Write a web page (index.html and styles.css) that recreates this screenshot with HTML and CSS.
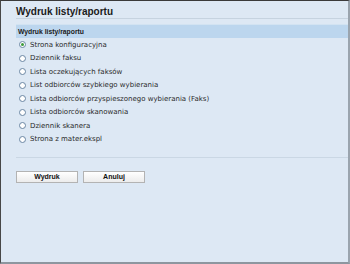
FILE: index.html
```html
<!DOCTYPE html>
<html lang="pl">
<head>
    <meta charset="UTF-8">
    <title>Wydruk listy/raportu</title>
    <link rel="stylesheet" href="styles.css">
</head>
<body>

    <div id="frame">
        <div id="title">Wydruk listy/raportu</div>

        <div id="section-head">Wydruk listy/raportu</div>

        <div id="report-list">
            <label class="report-row"><span class="radio checked"></span>Strona konfiguracyjna</label>
            <label class="report-row"><span class="radio"></span>Dziennik faksu</label>
            <label class="report-row"><span class="radio"></span>Lista oczekujących faksów</label>
            <label class="report-row"><span class="radio"></span>List odbiorców szybkiego wybierania</label>
            <label class="report-row"><span class="radio"></span>Lista odbiorców przyspieszonego wybierania (Faks)</label>
            <label class="report-row"><span class="radio"></span>Lista odbiorców skanowania</label>
            <label class="report-row"><span class="radio"></span>Dziennik skanera</label>
            <label class="report-row"><span class="radio"></span>Strona z mater.ekspl</label>
        </div>

        <div id="separator"></div>

        <div id="buttons">
            <button class="btn">Wydruk</button>
            <button class="btn">Anuluj</button>
        </div>
    </div>

</body>
</html>
```

FILE: styles.css
```css
 body {
     margin: 0;
     padding: 0;
     background-color: #dde8f4;
     font-family: 'Liberation Sans', Arial, sans-serif;
 }

 #frame {
     height: 264px;
     box-sizing: border-box;
     border-top: 1px solid #3a3a3a;
     border-left: 1px solid #474747;
     border-right: 2px solid #9aa4ae;
     border-bottom: 2px solid #8d969f;
     padding-left: 15px;
     background-color: #dde8f4;
 }

 #title {
     margin-top: 4px;
     font-size: 10px;
     line-height: 13px;
     font-weight: bold;
     color: #1a1a1a;
     border-bottom: 1px solid #c6d3e0;
 }

 #section-head {
     margin-top: 5px;
     height: 14px;
     line-height: 13px;
     padding-left: 2px;
     font-size: 6.8px;
     font-weight: bold;
     color: #1a1a1a;
     background-color: #bcd6ee;
     border-top: 1px solid #d2e3f2;
     box-sizing: border-box;
 }

 #report-list {
     display: flex;
     flex-direction: column;
 }

 .report-row {
     display: flex;
     align-items: center;
     height: 13.5px;
     padding-left: 3px;
     font-family: 'DejaVu Sans', Verdana, sans-serif;
     font-size: 7px;
     color: #2a2a2a;
 }

 .radio {
     width: 7px;
     height: 7px;
     box-sizing: border-box;
     border: 1px solid #6a86a3;
     border-radius: 50%;
     background-color: #fff;
     margin-right: 4px;
     display: flex;
     align-items: center;
     justify-content: center;
 }

 .radio.checked::after {
     content: "";
     width: 3px;
     height: 3px;
     border-radius: 50%;
     background-color: #3c9a3c;
 }

 #separator {
     margin-top: 11px;
     border-top: 1px solid #cad7e4;
 }

 #buttons {
     display: flex;
     gap: 5px;
     margin-top: 13px;
 }

 .btn {
     width: 62px;
     height: 12px;
     padding: 0;
     margin: 0;
     box-sizing: border-box;
     border: 1px solid #b3b3b3;
     border-radius: 0;
     background: linear-gradient(#ffffff, #ececec);
     font-family: 'Liberation Sans', Arial, sans-serif;
     font-size: 7px;
     font-weight: bold;
     color: #111;
     line-height: 10px;
 }
```
